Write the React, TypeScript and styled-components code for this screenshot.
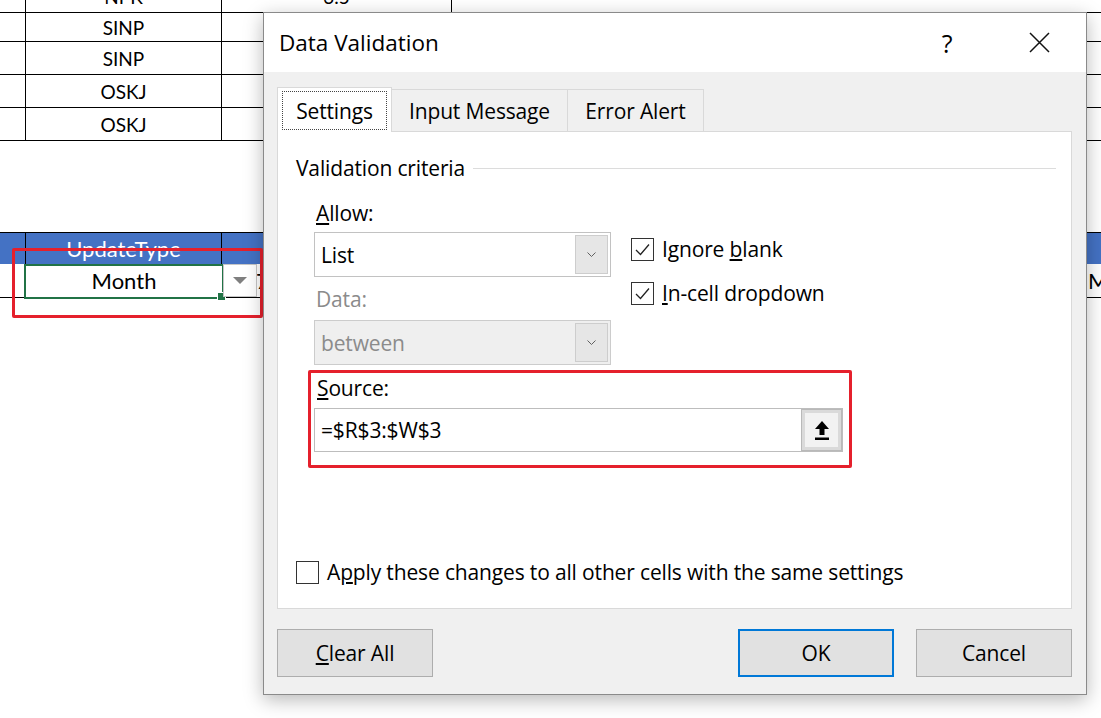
import styled, { createGlobalStyle } from 'styled-components'

const GlobalStyle = createGlobalStyle`
  html, body {
    margin: 0;
    padding: 0;
    background: #fff;
  }
  body {
    width: 1101px;
    height: 718px;
    overflow: hidden;
  }
`

const Page = styled.div`
  position: relative;
  width: 1101px;
  height: 718px;
  overflow: hidden;
  background: #fff;
`

/* ---------- spreadsheet behind the dialog ---------- */

const Sheet = styled.div`
  display: flex;
  flex-direction: column;
  font-family: Lato, 'Liberation Sans', sans-serif;
  color: #000;
`

const TopTable = styled.div`
  display: flex;
  flex-direction: column;
  margin-top: -20px;
`

const SheetRow = styled.div<{ $h: number; $header?: boolean; $gap?: number }>`
  display: grid;
  grid-template-columns: 26px 196px 230px 634px 1fr;
  height: ${({ $h }) => $h}px;
  margin-top: ${({ $gap }) => ($gap ? $gap : 0)}px;
  box-sizing: border-box;
  border-bottom: ${({ $header }) => ($header ? 'none' : '1px solid #000')};
  border-top: ${({ $header }) => ($header ? '1px solid #000' : 'none')};
  background: ${({ $header }) => ($header ? '#4472C4' : 'transparent')};
  color: ${({ $header }) => ($header ? '#fff' : '#000')};
`

const Cell = styled.div<{ $line?: boolean; $size?: number; $align?: string; $pad?: number }>`
  position: relative;
  display: flex;
  align-items: center;
  justify-content: ${({ $align }) => $align || 'center'};
  padding-left: ${({ $pad }) => ($pad ? $pad : 0)}px;
  border-right: ${({ $line }) => ($line ? '1px solid #000' : 'none')};
  font-size: ${({ $size }) => ($size ? $size : 19)}px;
  white-space: nowrap;
  overflow: visible;
`

const Selection = styled.div`
  position: absolute;
  left: -2px;
  top: 0;
  right: -2px;
  bottom: -2px;
  border: 2px solid #217346;
  pointer-events: none;
`

const FillHandle = styled.div`
  position: absolute;
  right: -4px;
  bottom: -4px;
  width: 7px;
  height: 7px;
  background: #217346;
  border: 1px solid #fff;
`

const CellDrop = styled.div`
  position: absolute;
  left: calc(100% + 1px);
  top: 0;
  width: 34px;
  height: 33px;
  box-sizing: border-box;
  background: #fff;
  border: 1px solid #c6c6c6;
  display: flex;
  align-items: center;
  justify-content: center;
  z-index: 2;
`

const Highlight = styled.div<{ $x: number; $y: number; $w: number; $h: number }>`
  position: absolute;
  left: ${({ $x }) => $x}px;
  top: ${({ $y }) => $y}px;
  width: ${({ $w }) => $w}px;
  height: ${({ $h }) => $h}px;
  box-sizing: border-box;
  border: 3px solid #e5202c;
  border-radius: 2px;
  pointer-events: none;
  z-index: 3;
`

/* ---------- dialog ---------- */

const Dialog = styled.div`
  position: absolute;
  left: 263px;
  top: 12px;
  width: 824px;
  height: 683px;
  box-sizing: border-box;
  border: 1px solid #8a8a8a;
  background: #f0f0f0;
  display: flex;
  flex-direction: column;
  box-shadow: 0 5px 18px rgba(0, 0, 0, 0.28);
  font-family: 'Open Sans', 'Noto Sans', sans-serif;
  font-size: 21px;
  letter-spacing: -0.15px;
  color: #000;
  z-index: 5;
`

const TitleBar = styled.div`
  height: 59px;
  background: #fff;
  display: flex;
  align-items: center;
  padding: 0 17px 0 15px;
  gap: 32px;
`

const Title = styled.div`
  flex: 1;
  font-size: 22.5px;
  letter-spacing: 0;
`

const TitleButton = styled.div`
  width: 60px;
  height: 100%;
  display: flex;
  align-items: center;
  justify-content: center;
  font-size: 25px;
`

const Body = styled.div`
  flex: 1;
  display: flex;
  flex-direction: column;
  padding: 15px 14px 16px 13px;
`

const TabBar = styled.div`
  display: flex;
  align-items: flex-end;
  height: 44px;
  position: relative;
  z-index: 1;
`

const Tab = styled.div<{ $w: number; $active?: boolean }>`
  width: ${({ $w }) => $w}px;
  height: ${({ $active }) => ($active ? 45 : 42)}px;
  margin-bottom: ${({ $active }) => ($active ? -1 : 0)}px;
  margin-left: -1px;
  box-sizing: border-box;
  border: 1px solid #d9d9d9;
  border-bottom: none;
  background: ${({ $active }) => ($active ? '#fff' : '#f0f0f0')};
  display: flex;
  align-items: stretch;
  justify-content: center;
  padding: ${({ $active }) => ($active ? '3px 4px 2px 4px' : '0')};

  &:first-child {
    margin-left: 0;
  }
`

const TabLabel = styled.div<{ $focus?: boolean }>`
  flex: 1;
  display: flex;
  align-items: center;
  justify-content: center;
  border: 1px dotted ${({ $focus }) => ($focus ? '#444' : 'transparent')};
`

const Panel = styled.div`
  height: 478px;
  box-sizing: border-box;
  border: 1px solid #d9d9d9;
  background: #fff;
  display: flex;
  flex-direction: column;
  padding: 21px 15px 21px 18px;
`

const GroupHeader = styled.div`
  display: flex;
  align-items: center;
  gap: 8px;
  height: 30px;

  &::after {
    content: '';
    flex: 1;
    height: 1px;
    background: #dcdcdc;
  }
`

const Criteria = styled.div`
  display: flex;
  gap: 20px;
  padding-left: 18px;
  margin-top: 15px;
`

const LeftCol = styled.div`
  width: 297px;
  display: flex;
  flex-direction: column;
`

const RightCol = styled.div`
  display: flex;
  flex-direction: column;
  gap: 14px;
  padding-top: 36px;
`

const Label = styled.div<{ $disabled?: boolean; $gap?: number }>`
  height: 30px;
  line-height: 30px;
  padding-left: 2px;
  margin-top: ${({ $gap }) => ($gap ? $gap : 0)}px;
  color: ${({ $disabled }) => ($disabled ? '#8b8b8b' : '#000')};
`

const Select = styled.div<{ $disabled?: boolean; $gap?: number }>`
  height: 45px;
  margin-top: ${({ $gap }) => ($gap ? $gap : 0)}px;
  box-sizing: border-box;
  border: 1px solid ${({ $disabled }) => ($disabled ? '#cccccc' : '#c2c2c2')};
  background: ${({ $disabled }) => ($disabled ? '#efefef' : '#fff')};
  color: ${({ $disabled }) => ($disabled ? '#8b8b8b' : '#000')};
  display: flex;
  align-items: center;
  padding: 2px 2px 2px 6px;
`

const SelectText = styled.div`
  flex: 1;
`

const SelectButton = styled.div`
  width: 33px;
  align-self: stretch;
  box-sizing: border-box;
  border: 1px solid #cdcdcd;
  background: #e6e6e6;
  display: flex;
  align-items: center;
  justify-content: center;
`

const CheckRow = styled.div`
  display: flex;
  align-items: center;
  gap: 8px;
  height: 30px;
`

const Box = styled.div`
  width: 23px;
  height: 23px;
  box-sizing: border-box;
  border: 1px solid #333;
  background: #fff;
  display: flex;
  align-items: center;
  justify-content: center;
`

const SourceBox = styled.div`
  margin: 5px 0 0 -6px;
  width: 544px;
  box-sizing: border-box;
  border: 3px solid #e5202c;
  border-radius: 2px;
  padding: 0 6px 13px 3px;
  display: flex;
  flex-direction: column;
`

const SourceLabel = styled.div`
  height: 30px;
  line-height: 30px;
  padding-left: 3px;
`

const SourceInput = styled.div`
  margin-top: 5px;
  height: 44px;
  box-sizing: border-box;
  border: 1px solid #bdbdbd;
  background: #fff;
  display: flex;
  align-items: center;
  padding-left: 6px;
`

const CollapseButton = styled.div`
  width: 41px;
  align-self: stretch;
  box-sizing: border-box;
  border: 1px solid #b9b9b9;
  background: #f2f2f2;
  box-shadow: inset 0 0 0 3px #dadada;
  display: flex;
  align-items: center;
  justify-content: center;
`

const ApplyRow = styled(CheckRow)`
  margin-top: auto;
`

const ButtonRow = styled.div`
  display: flex;
  gap: 22px;
  margin-top: 20px;
  height: 48px;
`

const Button = styled.div<{ $primary?: boolean; $w: number }>`
  width: ${({ $w }) => $w}px;
  box-sizing: border-box;
  border: ${({ $primary }) => ($primary ? '2px solid #0078d7' : '1px solid #adadad')};
  background: #e1e1e1;
  display: flex;
  align-items: center;
  justify-content: center;

  &:first-child {
    margin-right: auto;
  }
`

const Check = () => (
  <svg width="17" height="17" viewBox="0 0 17 17">
    <polyline points="2,9 6.5,13.5 15,3.5" fill="none" stroke="#222" strokeWidth="1.3" />
  </svg>
)

const Chevron = () => (
  <svg width="9" height="6" viewBox="0 0 9 6">
    <polyline points="0.5,0.5 4.5,4.5 8.5,0.5" fill="none" stroke="#606060" strokeWidth="1" />
  </svg>
)

export default function App() {
  return (
    <Page>
      <GlobalStyle />
      <Sheet>
        <TopTable>
          <SheetRow $h={33}>
            <Cell $line />
            <Cell $line>NPK</Cell>
            <Cell $line>3.5</Cell>
            <Cell />
            <Cell />
          </SheetRow>
          <SheetRow $h={29}>
            <Cell $line />
            <Cell $line>SINP</Cell>
            <Cell $line />
            <Cell />
            <Cell />
          </SheetRow>
          <SheetRow $h={33}>
            <Cell $line />
            <Cell $line>SINP</Cell>
            <Cell $line />
            <Cell />
            <Cell />
          </SheetRow>
          <SheetRow $h={33}>
            <Cell $line />
            <Cell $line>OSKJ</Cell>
            <Cell $line />
            <Cell />
            <Cell />
          </SheetRow>
          <SheetRow $h={33}>
            <Cell $line />
            <Cell $line>OSKJ</Cell>
            <Cell $line />
            <Cell />
            <Cell />
          </SheetRow>
        </TopTable>

        <SheetRow $h={32} $header $gap={91}>
          <Cell $line />
          <Cell $line $size={22}>
            UpdateType
          </Cell>
          <Cell $line />
          <Cell />
          <Cell />
        </SheetRow>
        <SheetRow $h={34}>
          <Cell $line />
          <Cell $size={22}>
            Month
            <Selection>
              <FillHandle />
            </Selection>
            <CellDrop>
              <svg width="14" height="8" viewBox="0 0 14 8">
                <polygon points="0,0 14,0 7,7" fill="#7f7f7f" />
              </svg>
            </CellDrop>
          </Cell>
          <Cell $size={22} $align="flex-start" $pad={34}>
            7
          </Cell>
          <Cell />
          <Cell $size={22} $align="flex-start" $pad={2}>
            Month
          </Cell>
        </SheetRow>
      </Sheet>

      <Highlight $x={12} $y={248} $w={251} $h={70} />

      <Dialog>
        <TitleBar>
          <Title>Data Validation</Title>
          <TitleButton>?</TitleButton>
          <TitleButton>
            <svg width="21" height="21" viewBox="0 0 21 21">
              <path d="M1 1 L20 20 M20 1 L1 20" stroke="#111" strokeWidth="1.5" />
            </svg>
          </TitleButton>
        </TitleBar>

        <Body>
          <TabBar>
            <Tab $w={115} $active>
              <TabLabel $focus>Settings</TabLabel>
            </Tab>
            <Tab $w={177}>
              <TabLabel>Input Message</TabLabel>
            </Tab>
            <Tab $w={137}>
              <TabLabel>Error Alert</TabLabel>
            </Tab>
          </TabBar>

          <Panel>
            <GroupHeader>Validation criteria</GroupHeader>

            <Criteria>
              <LeftCol>
                <Label>
                  <u>A</u>llow:
                </Label>
                <Select $gap={4}>
                  <SelectText>List</SelectText>
                  <SelectButton>
                    <Chevron />
                  </SelectButton>
                </Select>
                <Label $disabled $gap={7}>
                  Data:
                </Label>
                <Select $disabled $gap={6}>
                  <SelectText>between</SelectText>
                  <SelectButton>
                    <Chevron />
                  </SelectButton>
                </Select>
                <SourceBox>
                  <SourceLabel>
                    <u>S</u>ource:
                  </SourceLabel>
                  <SourceInput>
                    <SelectText>=$R$3:$W$3</SelectText>
                    <CollapseButton>
                      <svg width="16" height="21" viewBox="0 0 16 21">
                        <polygon points="8,1 15,9 10.5,9 10.5,15 5.5,15 5.5,9 1,9" fill="#000" />
                        <rect x="1" y="17.5" width="14" height="2.5" fill="#000" />
                      </svg>
                    </CollapseButton>
                  </SourceInput>
                </SourceBox>
              </LeftCol>

              <RightCol>
                <CheckRow>
                  <Box>
                    <Check />
                  </Box>
                  <span>
                    Ignore <u>b</u>lank
                  </span>
                </CheckRow>
                <CheckRow>
                  <Box>
                    <Check />
                  </Box>
                  <span>
                    <u>I</u>n-cell dropdown
                  </span>
                </CheckRow>
              </RightCol>
            </Criteria>

            <ApplyRow>
              <Box />
              <span>
                A<u>p</u>ply these changes to all other cells with the same settings
              </span>
            </ApplyRow>
          </Panel>

          <ButtonRow>
            <Button $w={156}>
              <span>
                <u>C</u>lear All
              </span>
            </Button>
            <Button $w={156} $primary>
              OK
            </Button>
            <Button $w={156}>Cancel</Button>
          </ButtonRow>
        </Body>
      </Dialog>
    </Page>
  )
}
